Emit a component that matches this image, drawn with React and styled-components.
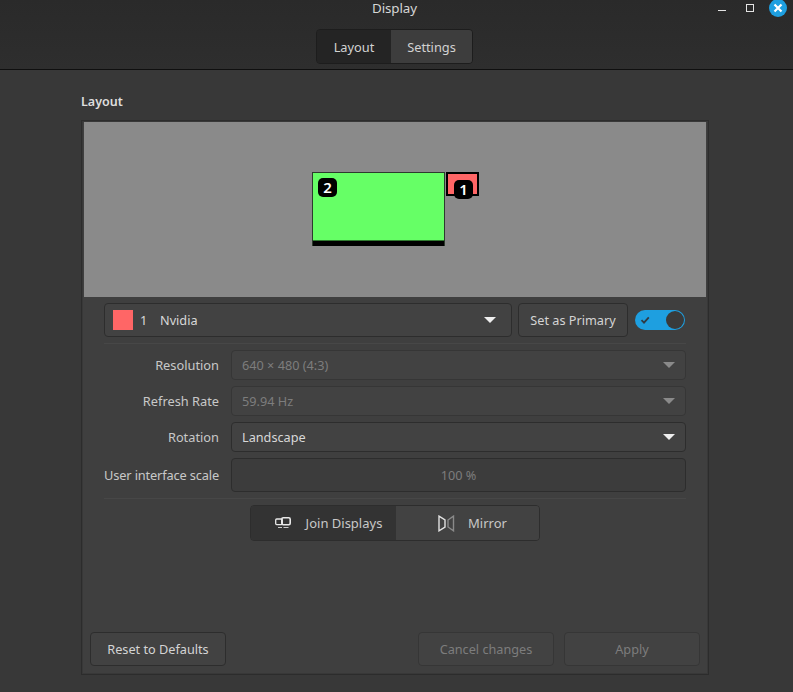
import React from "react";
import styled, { createGlobalStyle } from "styled-components";

const Global = createGlobalStyle`
  html, body { margin: 0; padding: 0; background: #383838; }
  * { box-sizing: border-box; }
  body { font-family: "Noto Sans", "Open Sans", sans-serif; font-size: 12.7px; color: #d8d8d8; }
`;

const Window = styled.div`
  width: 793px; height: 692px; display: flex; flex-direction: column; overflow: hidden; background: #383838;
`;
const Header = styled.header`
  height: 70px; flex: none; display: flex; flex-direction: column; align-items: center; position: relative;
  background: linear-gradient(#2a2a2a, #2e2e2e); border-bottom: 1px solid #0f0f0f; padding-right: 4px;
`;
const TitleBar = styled.div`
  width: 100%; height: 29px; flex: none; display: flex; justify-content: center;
`;
const Title = styled.div`
  color: #d6d6d6; font-size: 13.4px; line-height: 17px; letter-spacing: -0.1px;
`;
const WindowButtons = styled.div`
  position: absolute; top: 0; right: 6px; display: flex; align-items: flex-start; height: 18px;
`;
const Minimize = styled.span`
  width: 8px; height: 1px; background: #e4e4e4; margin-top: 10px; margin-right: 20px;
`;
const Maximize = styled.span`
  width: 8px; height: 8px; border: 1px solid #e4e4e4; margin-top: 4px; margin-right: 15px;
`;
const Close = styled.span`
  width: 18px; height: 18px; margin-top: -1px; border-radius: 50%; background: #1e9fe0; display: flex; align-items: center; justify-content: center;
`;
const Tabs = styled.div`
  display: flex; height: 35px; border: 1px solid #1d1d1d; border-radius: 4px; overflow: hidden; font-size: 12.8px;
`;
const Tab = styled.div`
  display: flex; align-items: center; justify-content: center; width: ${p => p.$w}px;
  background: ${p => (p.$active ? "#242424" : "#3d3d3d")}; color: #d2d2d2;
`;
const Body = styled.main`
  flex: 1; display: flex; flex-direction: column; padding: 22px 84px 17px 81px;
`;
const SectionTitle = styled.h2`
  margin: 0 0 9px; font-size: 12.5px; line-height: 19px; font-weight: 600; color: #dedede;
`;
const Frame = styled.section`
  flex: 1; display: flex; flex-direction: column; background: #3f3f3f; border: 1px solid #2c2c2c; box-shadow: inset 0 0 0 1px #383838;
`;
const Preview = styled.div`
  position: relative; height: 175px; flex: none; margin: 1px 2px 0 2px; background: #8a8a8a;
`;
const Monitor = styled.div`
  position: absolute; left: ${p => p.$x}px; top: ${p => p.$y}px; width: ${p => p.$w}px; height: ${p => p.$h}px;
  background: #000; border: ${p => p.$b}px solid ${p => p.$border}; border-bottom: none;
`;
const MonitorFill = styled.div`
  height: ${p => p.$h}px; background: ${p => p.$color}; border-bottom: 1px solid ${p => p.$edge};
`;
const MonitorBadge = styled.div`
  position: absolute; left: ${p => p.$x}px; top: ${p => p.$y}px; width: 19px; height: 19px; border-radius: 5px; background: #000; color: #fff;
  display: flex; align-items: center; justify-content: center; font-size: 15px; font-weight: 600; line-height: 1;
`;
const Controls = styled.div`
  display: flex; flex-direction: column; padding: 6px 22px 0 22px;
`;
const TopRow = styled.div`
  display: flex; align-items: center; gap: 6px; height: 34px; padding-right: 1px;
`;
const Field = styled.div`
  flex: 1; height: 30px; display: flex; align-items: center; padding: 0 10px;
  background: #424242; border: 1px solid ${p => (p.$disabled ? "#363636" : "#2d2d2d")}; border-radius: 4px;
  color: ${p => (p.$disabled ? "#7d7d7d" : "#d8d8d8")};
`;
const OutputSelect = styled(Field)`
  padding: 0 15px 0 8px; height: 34px;
`;
const ScaleField = styled(Field)`
  height: 34px; background: #3c3c3c; border-color: #2d2d2d;
`;
const Swatch = styled.span`
  width: 20px; height: 20px; background: #ff6666; margin-right: 7px; flex: none;
`;
const OutputNum = styled.span`
  width: 20px; flex: none;
`;
const Grow = styled.span`
  flex: 1; text-align: ${p => (p.$center ? "center" : "left")};
`;
const Caret = styled.span`
  width: 0; height: 0; border-left: 6px solid transparent; border-right: 6px solid transparent;
  border-top: 6px solid ${p => (p.$disabled ? "#8a8a8a" : "#eeeeee")};
`;
const Button = styled.div`
  width: ${p => p.$w}px; height: 34px; flex: none; display: flex; align-items: center; justify-content: center;
  background: #424242; border: 1px solid ${p => (p.$disabled ? "#363636" : "#2d2d2d")}; border-radius: 4px;
  color: ${p => (p.$disabled ? "#7d7d7d" : "#d4d4d4")};
`;
const Switch = styled.div`
  position: relative; width: 50px; height: 20px; margin-left: 1px; border-radius: 10px; background: #1e9fe0; flex: none;
`;
const SwitchCheck = styled.svg`
  position: absolute; left: 5px; top: 5px;
`;
const Knob = styled.span`
  position: absolute; right: 1px; top: 1px; width: 18px; height: 18px; border-radius: 50%; background: #3a3a3a;
`;
const Divider = styled.div`
  height: 1px; background: #474747; margin: ${p => p.$m};
`;
const SettingRow = styled.div`
  display: grid; grid-template-columns: 115px 1fr; column-gap: 12px; align-items: center; margin-bottom: 6px;
`;
const Label = styled.label`
  display: flex; justify-content: flex-end; color: #c8c8c8; white-space: nowrap; font-size: 12.8px;
  letter-spacing: ${p => (p.$tight ? "-0.15px" : "0")};
`;
const Segmented = styled.div`
  align-self: center; display: flex; height: 36px; border: 1px solid #2d2d2d; border-radius: 4px; overflow: hidden; font-size: 13px;
`;
const Segment = styled.div`
  width: ${p => p.$w}px; display: flex; align-items: center; justify-content: center; gap: ${p => p.$gap}px; padding-left: ${p => p.$pad}px;
  background: ${p => (p.$active ? "#333333" : "#424242")}; color: #c8c8c8;
`;
const Spacer = styled.div`
  flex: 1;
`;
const Footer = styled.footer`
  display: flex; align-items: center; padding: 0 8px 8px 8px; gap: 10px;
`;

function JoinIcon() {
  return (
    <svg width="16" height="12" viewBox="0 0 16 12" fill="none" stroke="#e8e8e8">
      <rect x="0.7" y="2" width="6.6" height="5.6" rx="1" strokeWidth="1.3" />
      <rect x="6.8" y="0.8" width="8.4" height="7" rx="1.5" strokeWidth="1.6" />
      <path d="M3 10.5h4M8.5 10.5h5" strokeWidth="1" stroke="#c8c8c8" />
    </svg>
  );
}
function MirrorIcon() {
  return (
    <svg width="17" height="17" viewBox="0 0 17 17" fill="none" strokeWidth="1.4">
      <path d="M1 1.2 7 5v7L1 15.8z" stroke="#e2e2e2" />
      <path d="M15.5 1.2 10 5v7l5.5 3.8z" stroke="#8a8a8a" />
    </svg>
  );
}

export default function App() {
  return (
    <>
      <Global />
      <Window>
        <Header>
          <TitleBar>
            <Title>Display</Title>
          </TitleBar>
          <WindowButtons>
            <Minimize />
            <Maximize />
            <Close>
              <svg width="10" height="10" viewBox="0 0 10 10" stroke="#fff" strokeWidth="2.2">
                <path d="M1.5 1.5l7 7M8.5 1.5l-7 7" />
              </svg>
            </Close>
          </WindowButtons>
          <Tabs>
            <Tab $active $w={74}>Layout</Tab>
            <Tab $w={81}>Settings</Tab>
          </Tabs>
        </Header>
        <Body>
          <SectionTitle>Layout</SectionTitle>
          <Frame>
            <Preview>
              <Monitor $x={228} $y={50} $w={133} $h={74} $b={1} $border="#2d3a2d">
                <MonitorFill $h={68} $color="#66ff66" $edge="#2f7a2f" />
              </Monitor>
              <MonitorBadge $x={234} $y={56}>2</MonitorBadge>
              <Monitor $x={362} $y={50} $w={33} $h={24} $b={2} $border="#000">
                <MonitorFill $h={20} $color="#ff6666" $edge="#ff6666" />
              </Monitor>
              <MonitorBadge $x={370} $y={58}>1</MonitorBadge>
            </Preview>
            <Controls>
              <TopRow>
                <OutputSelect>
                  <Swatch />
                  <OutputNum>1</OutputNum>
                  <Grow>Nvidia</Grow>
                  <Caret />
                </OutputSelect>
                <Button $w={110}>Set as Primary</Button>
                <Switch>
                  <SwitchCheck width="11" height="10" viewBox="0 0 11 10" fill="none" stroke="#2f3a44" strokeWidth="1.8">
                    <path d="M1.5 5.2 4 7.6 8.8 2.4" />
                  </SwitchCheck>
                  <Knob />
                </Switch>
              </TopRow>
              <Divider $m="6px 0" />
              <SettingRow>
                <Label>Resolution</Label>
                <Field $disabled>
                  <Grow>640 × 480 (4:3)</Grow>
                  <Caret $disabled />
                </Field>
              </SettingRow>
              <SettingRow>
                <Label>Refresh Rate</Label>
                <Field $disabled>
                  <Grow>59.94 Hz</Grow>
                  <Caret $disabled />
                </Field>
              </SettingRow>
              <SettingRow>
                <Label>Rotation</Label>
                <Field>
                  <Grow>Landscape</Grow>
                  <Caret />
                </Field>
              </SettingRow>
              <SettingRow>
                <Label $tight>User interface scale</Label>
                <ScaleField $disabled>
                  <Grow $center>100 %</Grow>
                </ScaleField>
              </SettingRow>
              <Divider $m="0 0 6px 0" />
              <Segmented>
                <Segment $active $w={145} $gap={15} $pad={10}>
                  <JoinIcon />
                  Join Displays
                </Segment>
                <Segment $w={143} $gap={13} $pad={10}>
                  <MirrorIcon />
                  Mirror
                </Segment>
              </Segmented>
            </Controls>
            <Spacer />
            <Footer>
              <Button $w={136}>Reset to Defaults</Button>
              <Spacer />
              <Button $w={136} $disabled>Cancel changes</Button>
              <Button $w={136} $disabled>Apply</Button>
            </Footer>
          </Frame>
        </Body>
      </Window>
    </>
  );
}
